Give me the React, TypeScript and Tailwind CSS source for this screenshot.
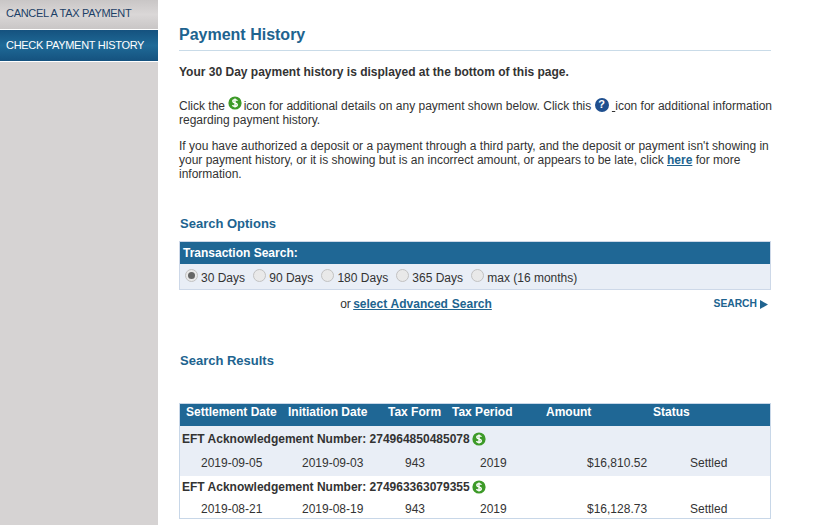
const ranges = ["30 Days", "90 Days", "180 Days", "365 Days", "max (16 months)"]

const columns = "grid grid-cols-[105px_100px_64px_90px_90px_1fr]"

const payments = [
  { eft: "274964850485078", settled: "2019-09-05", initiated: "2019-09-03", form: "943", period: "2019", amount: "$16,810.52", status: "Settled", shaded: true },
  { eft: "274963363079355", settled: "2019-08-21", initiated: "2019-08-19", form: "943", period: "2019", amount: "$16,128.73", status: "Settled", shaded: false },
]

function DollarIcon({ className }: { className: string }) {
  return (
    <svg className={`inline-block w-[14px] h-[14px] ${className}`} viewBox="0 0 14 14">
      <circle cx="7" cy="7" r="6.6" fill="#3d9a28" />
      <path d="M9.4 4.8C9 3.9 8 3.6 7 3.6c-1.2 0-2.2.6-2.2 1.7 0 2.3 4.5 1.2 4.5 3.4 0 1.1-1 1.700-2.300 1.700-1.100 0-2.100-.4-2.500-1.300M7 2.400v9.200" fill="none" stroke="#fff" strokeWidth="1.400" />
    </svg>
  )
}

function HelpIcon() {
  return (
    <span className="inline-flex w-[14px] h-[14px] -mt-[4px] rounded-full bg-[#1f4f8f] text-white text-[11px] font-bold items-center justify-center align-[2px] leading-none">
      ?
    </span>
  )
}

function Radio({ checked }: { checked: boolean }) {
  return (
    <span className="w-[13px] h-[13px] rounded-full border border-[#c2c2c2] bg-[#e9e9e9] flex items-center justify-center">
      {checked && <span className="w-[7px] h-[7px] rounded-full bg-[#666]" />}
    </span>
  )
}

export default function App() {
  return (
    <div className="flex w-[818px] h-[525px] overflow-hidden bg-white text-[12px] leading-[14px] text-[#333] font-['Liberation_Sans',Arial,sans-serif]">
      <aside className="w-[158px] shrink-0 bg-[#d6d3d3]">
        <div className="h-[29px] pl-[6px] pb-[3px] flex items-center text-[11px] tracking-[-0.3px] text-[#1c3f66] bg-gradient-to-b from-[#c9c6c6] via-[#dad7d7] to-[#c9c6c6]">
          CANCEL A TAX PAYMENT
        </div>
        <div className="h-[33px] pl-[6px] pb-[2px] flex items-center text-[11px] tracking-[-0.3px] text-white border-y border-white bg-gradient-to-b from-[#15527f] via-[#1f6a97] to-[#15527f]">
          CHECK PAYMENT HISTORY
        </div>
      </aside>

      <main className="w-[592px] ml-[21px] pt-[26px]">
        <h1 className="text-[16px] leading-[18px] font-bold text-[#20638f] pb-[6px] border-b border-[#c9dbe8]">Payment History</h1>
        <p className="mt-[14px] font-bold text-[#333]">Your 30 Day payment history is displayed at the bottom of this page.</p>
        <p className="mt-[20px] w-[600px]">
          Click the <DollarIcon className="align-[0px] -mt-[4px] -mr-[2px]" /> icon for additional details on any payment shown below. Click this <HelpIcon /> <span className="underline">&nbsp;</span>icon for additional information regarding payment history.
        </p>
        <p className="mt-[12px]">
          If you have authorized a deposit or a payment through a third party, and the deposit or payment isn't showing in your payment history, or it is showing but is an incorrect amount, or appears to be late, click <a className="font-bold underline text-[#20638f]">here</a> for more information.
        </p>

        <h2 className="mt-[35px] ml-px text-[13px] leading-[15px] font-bold text-[#20638f]">Search Options</h2>
        <div className="mt-[10px] border border-[#cdd8e8]">
          <div className="h-[22px] bg-[#1f6795] pl-[3px] flex items-center font-bold text-white">Transaction Search:</div>
          <div className="h-[25px] bg-[#e9eef6] pl-[5px] flex items-center">
            {ranges.map((range, i) => (
              <label key={range} className="flex items-center gap-[3px] mr-[8.2px]">
                <span className="pb-[3px]"><Radio checked={i === 0} /></span>
                <span className="pt-[2px]">{range}</span>
              </label>
            ))}
          </div>
        </div>
        <div className="relative mt-[7px] h-[14px] text-center pr-[118px]">
          or <a className="-ml-[1px] font-bold underline text-[#20638f] [word-spacing:0.5px]">select Advanced Search</a>
          <a className="absolute right-[3px] top-0 flex items-center gap-[3px] text-[10.3px] font-bold text-[#20638f]">
            SEARCH
            <svg className="w-[8px] h-[9px]" viewBox="0 0 8 9"><path d="M0 0l8 4.500-8 4.500z" fill="#20638f" /></svg>
          </a>
        </div>

        <h2 className="mt-[42px] ml-px text-[13px] leading-[15px] font-bold text-[#20638f]">Search Results</h2>
        <div className="mt-[35px] border border-[#c8d7e8]">
          <div className={`${columns} h-[22px] pb-[6px] bg-[#1f6795] items-center font-bold text-white`}>
            <span className="pl-[6px]">Settlement Date</span>
            <span className="pl-[3px]">Initiation Date</span>
            <span className="pl-[3px]">Tax Form</span>
            <span className="pl-[3px]">Tax Period</span>
            <span className="pl-[7px]">Amount</span>
            <span className="pl-[24px]">Status</span>
          </div>
          {payments.map((p) => (
            <div key={p.eft} className={p.shaded ? "h-[50px] bg-[#e9eef6]" : "h-[42px] bg-white"}>
              <div className={`pl-[2px] font-bold ${p.shaded ? "pt-[6px]" : "pt-[4px]"}`}>
                EFT Acknowledgement Number: {p.eft}
                <DollarIcon className="ml-[2px] align-[-3px] -mt-[4px]" />
              </div>
              <div className={`${columns} ${p.shaded ? "mt-[10px]" : "mt-[8px]"}`}>
                <span className="pl-[21px]">{p.settled}</span>
                <span className="pl-[17px]">{p.initiated}</span>
                <span className="pl-[20px]">{p.form}</span>
                <span className="pl-[31px]">{p.period}</span>
                <span className="pl-[48px]">{p.amount}</span>
                <span className="pl-[61px]">{p.status}</span>
              </div>
            </div>
          ))}
        </div>
      </main>
    </div>
  )
}
